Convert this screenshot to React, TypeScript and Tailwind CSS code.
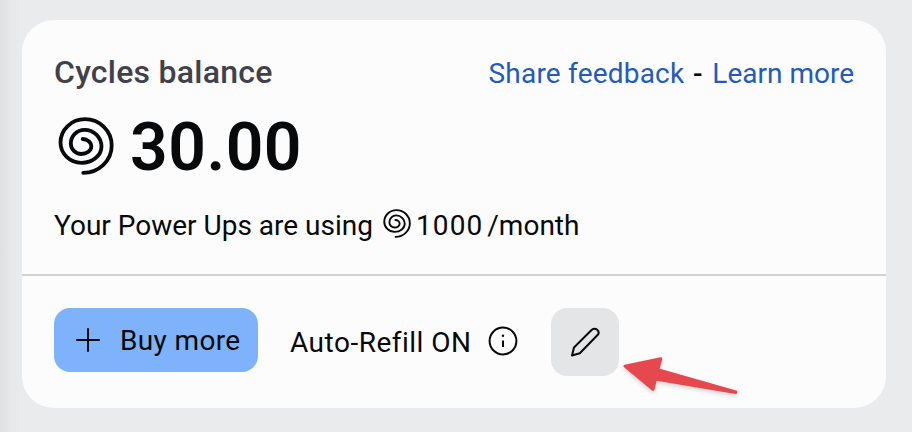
function Spiral({ className }: { className: string }) {
  return (
    <svg viewBox="0 0 56 58" className={className} fill="none" stroke="currentColor" strokeWidth="3.8" strokeLinecap="round">
      <path d="M24.7 22A8.6 7.6 0 0 1 33.3 29.6A10 7.4 0 0 1 23.3 37A10.5 10.5 0 0 1 12.8 26.5A13.7 13.7 0 0 1 26.5 12.8A17 17 0 0 1 43.5 29.5A20 16.3 0 0 1 23.5 45.8A21 20.3 0 0 1 2.5 25.5A24.5 23.3 0 0 1 27 2.2A26.7 26.3 0 0 1 53.7 28.5A28.5 27.3 0 0 1 25.2 55.8" />
    </svg>
  );
}

export default function App() {
  return (
    <main className="relative h-[432px] w-[912px] overflow-hidden bg-[#eaebed] bg-[linear-gradient(to_right,#dfe0e2_0,#e8e9eb_12px,#eaebed_26px)] pt-5 pl-[22px] font-['Roboto',sans-serif] text-[#08090b]">
      <section className="h-[388px] w-[864px] rounded-[32px] bg-[#fcfcfc]">
        <div className="h-[256px] border-b-2 border-[#d2d2d2] px-8 pt-8">
          <header className="flex h-10 items-center justify-between whitespace-nowrap">
            <h1 className="text-[32px] font-medium tracking-[0.25px] text-[#404149]">Cycles balance</h1>
            <nav className="flex pt-[3px] text-[28px] text-[#245bb7]">
              <a className="tracking-[0.2px]">Share feedback</a>
              <span className="mr-[9px] ml-2 w-[11px] text-center font-medium text-[#08090b]">-</span>
              <a>Learn more</a>
            </nav>
          </header>
          <div className="mt-[14px] flex h-20 items-center gap-4">
            <Spiral className="ml-1 h-[58px] w-14" />
            <strong className="pt-[3px] text-[66px] leading-none font-semibold tracking-[0.5px]">30.00</strong>
          </div>
          <p className="mt-[20px] flex h-10 items-center text-[28px] whitespace-nowrap">
            <span>Your Power Ups are using</span>
            <Spiral className="mr-[5px] mb-[5px] ml-[10px] h-[29px] w-7" />
            <span className="tracking-[1.1px]">1000</span>
            <span className="ml-1">/month</span>
          </p>
        </div>
        <footer className="flex items-start px-8 pt-8 text-[28px] whitespace-nowrap">
          <button className="flex h-16 w-[204px] items-center rounded-2xl bg-[#7eb2fa] pl-[22px]">
            <svg viewBox="0 0 24 24" className="mr-5 size-6" fill="none" stroke="currentColor" strokeWidth="2" strokeLinecap="round">
              <path d="M1 12h22M12 1v22" />
            </svg>
            <span className="pt-0.5 tracking-[0.35px]">Buy more</span>
          </button>
          <div className="ml-8 flex h-[68px] w-[228px] items-center justify-between">
            <span className="pt-0.5 tracking-[0.5px]">Auto-Refill ON</span>
            <svg viewBox="0 0 30 30" className="mb-0.5 size-[30px]" fill="none" stroke="currentColor" strokeWidth="2">
              <circle cx="15" cy="15" r="13.4" />
              <path d="M15 14.5v6.5" />
              <circle cx="15" cy="9.7" r="1.2" fill="currentColor" stroke="none" />
            </svg>
          </div>
          <button className="ml-[33px] flex size-[68px] items-center justify-center rounded-2xl bg-[#e4e5e7]">
            <svg viewBox="0 0 30 30" className="size-[30px]" fill="none" stroke="currentColor" strokeWidth="2" strokeLinejoin="round">
              <path d="M2 28.5L4 20.5L21.8 2.8C25.5 -0.2 30.5 4 27.8 7.8L9.8 26.2Z" />
            </svg>
          </button>
        </footer>
      </section>
      <svg viewBox="0 0 120 50" className="absolute top-[351px] left-[620px] h-[50px] w-[120px] drop-shadow-[0_2px_2px_rgba(0,0,0,0.18)]">
        <path d="M5 15.2L40.8 7.8L37.8 18.6L115.8 41V41.6L35.5 27.9L33 38.3Z" fill="#e5484d" stroke="#e5484d" strokeWidth="3" strokeLinejoin="round" />
      </svg>
    </main>
  );
}
